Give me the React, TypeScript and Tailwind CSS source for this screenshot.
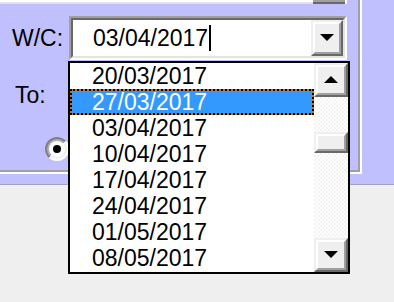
import React from "react";

const items = [
  "20/03/2017",
  "27/03/2017",
  "03/04/2017",
  "10/04/2017",
  "17/04/2017",
  "24/04/2017",
  "01/05/2017",
  "08/05/2017",
];

function Btn3D({ children, className = "" }: { children?: React.ReactNode; className?: string }) {
  return (
    <div
      className={
        "border-2 border-t-[#efefef] border-l-[#efefef] border-r-[#696969] border-b-[#696969] " +
        className
      }
    >
      <div className="w-full h-full border-2 border-t-white border-l-white border-r-[#a0a0a0] border-b-[#a0a0a0] bg-[#efefef] flex items-center justify-center">
        {children}
      </div>
    </div>
  );
}

function Down() {
  return (
    <svg width="14" height="8" viewBox="0 0 14 8">
      <polygon points="0,0 14,0 7,7" fill="#000" />
    </svg>
  );
}
function Up() {
  return (
    <svg width="14" height="8" viewBox="0 0 14 8">
      <polygon points="0,7 14,7 7,0" fill="#000" />
    </svg>
  );
}

export default function App() {
  return (
    <div
      className="relative w-[394px] h-[302px] overflow-hidden bg-[#efefef] text-black"
      style={{ fontFamily: '"Liberation Sans", Arial, sans-serif' }}
    >
      {/* purple panel */}
      <div className="h-[185px] bg-[#c0c0ff] border-b border-b-[#a0a0c0]">
        <div className="w-[362px] h-[174px] border-r-2 border-b-2 border-r-white border-b-white">
          <div className="w-full h-full border-r-2 border-b-2 border-r-[#a0a0a0] border-b-[#a0a0a0] flex flex-col">
            {/* top strip: bottom of a control above */}
            <div className="flex h-[4px] w-[347px]">
              <div className="flex-1 flex flex-col">
                <div className="h-[2px] bg-white" />
                <div className="h-[2px] bg-[#e3e3e3]" />
              </div>
              <div className="w-[32px] flex flex-col">
                <div className="h-[2px] bg-[#a0a0a0]" />
                <div className="h-[2px] bg-[#696969]" />
              </div>
              <div className="w-[2px] bg-white" />
            </div>

            {/* W/C row */}
            <div className="flex items-center mt-[12px] h-[44px]">
              <div className="w-[69px] pl-[12px] text-[23px] leading-none">W/C:</div>
              <div className="w-[278px] h-[44px] border-2 border-t-[#a0a0a0] border-l-[#a0a0a0] border-r-white border-b-white">
                <div className="w-full h-full border-2 border-t-[#696969] border-l-[#696969] border-r-[#e3e3e3] border-b-[#e3e3e3] bg-white flex">
                  <div className="flex-1 flex items-center pl-[20px] text-[23px] leading-none">
                    <span>03/04/2017</span>
                    <span className="w-[2px] h-[26px] bg-black ml-[1px]" />
                  </div>
                  <Btn3D className="w-[32px] h-[36px]">
                    <Down />
                  </Btn3D>
                </div>
              </div>
            </div>

            {/* To row */}
            <div className="mt-[24px] pl-[15px] text-[23px] leading-none">To:</div>

            {/* radio */}
            <div className="mt-[30px] pl-[45px]">
              <div className="w-[24px] h-[24px] rounded-full bg-[linear-gradient(135deg,#808080,#808080_50%,#ffffff_50%)] p-[2px]">
                <div className="w-full h-full rounded-full bg-[linear-gradient(135deg,#b0b0b0,#b0b0b0_50%,#efefef_50%)] p-[2px]">
                  <div className="w-full h-full rounded-full bg-white flex items-center justify-center">
                    <div className="w-[8px] h-[8px] rounded-full bg-black" />
                  </div>
                </div>
              </div>
            </div>
          </div>
        </div>
      </div>

      {/* dropdown list popup */}
      <div className="absolute left-[68px] top-[61px] w-[282px] h-[213px] border-2 border-black bg-white flex">
        <div className="flex-1 flex flex-col text-[23px] leading-none">
          {items.map((t, i) =>
            i === 1 ? (
              <div key={t} className="relative h-[26px] bg-[#c87010]">
                <div className="absolute inset-0 border-2 border-dotted border-black bg-[#3399ff] bg-clip-padding" />
                <div className="relative h-full flex items-center pl-[22px] pt-[1px] text-white">{t}</div>
              </div>
            ) : (
              <div key={t} className="h-[26px] flex items-center pl-[22px] pt-[1px]">
                {t}
              </div>
            )
          )}
        </div>
        <div className="w-[34px] flex flex-col bg-[repeating-conic-gradient(#ffffff_0_25%,#f3f3f3_0_50%)] bg-[length:4px_4px]">
          <Btn3D className="w-[34px] h-[34px]">
            <Up />
          </Btn3D>
          <div className="h-[35px]" />
          <Btn3D className="w-[34px] h-[21px]" />
          <div className="flex-1" />
          <Btn3D className="w-[34px] h-[34px]">
            <Down />
          </Btn3D>
        </div>
      </div>
    </div>
  );
}
